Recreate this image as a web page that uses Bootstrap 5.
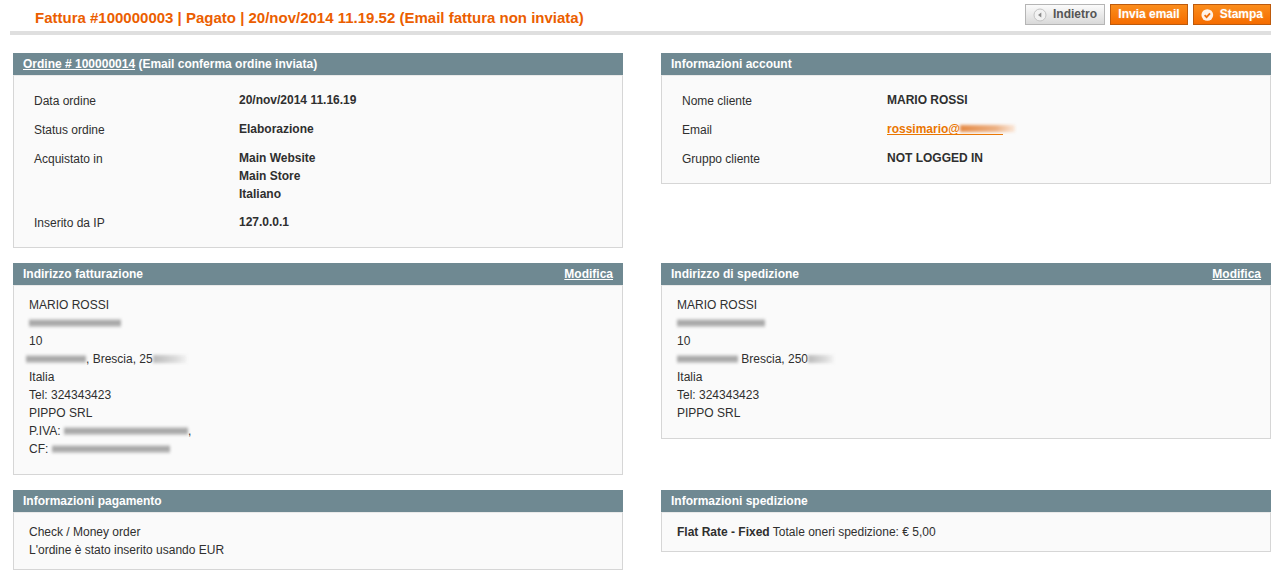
<!DOCTYPE html>
<html lang="it">
<head>
<meta charset="utf-8">
<title>Fattura</title>
<link href="https://cdn.jsdelivr.net/npm/bootstrap@5.3.0/dist/css/bootstrap.min.css" rel="stylesheet">
<style>
body{font-family:"Liberation Sans",Arial,sans-serif;font-size:12px;line-height:18px;color:#2f2f2f;background:#fff;overflow:hidden}
.pagewrap{padding:0 11px 0 13px}
.headbar{margin-left:-3px;height:35px;border-bottom:4px solid #dfdfdf;padding:4px 0 0 25px}
.headtitle{font-size:15px;line-height:21px;font-weight:700;color:#eb5e00;margin:3px 0 0}
.btnset{gap:5px}
.mbtn{height:21px;font:700 12px/19px "Liberation Sans",Arial,sans-serif;padding:0 7px;border:1px solid #bd5a0c;border-radius:0;color:#fff;background:linear-gradient(#fb8d1c,#f56c00);display:flex;align-items:center;gap:6px;text-shadow:0 0 2px #fff5}
.mbtn.backb{color:#555;border-color:#b5b5b5;background:linear-gradient(#fbfbfb,#d9d9d9);text-shadow:none;width:80px}
.mbtn.sendb{width:78px;justify-content:center}
.mbtn.printb{width:78px;justify-content:center}
.panelrow{--bs-gutter-x:38px;--bs-gutter-y:0;margin-bottom:15px}
.panelrow.firstr{margin-top:18px}
.phead{height:22px;background:#6f8992;color:#fff;font-weight:700;line-height:22px;padding:0 10px;display:flex;justify-content:space-between}
.phead a{color:#fff}
.pbody{background:#fafafa;border:1px solid #d6d6d6;border-top:1px solid #e9e9e9}
.pinfo{padding:15px 20px 15px}
.padr{padding:10px 15px 0}
.pinfo table{border-collapse:collapse}
.pinfo th{font-weight:400;width:205px;vertical-align:top;padding:1px 0 10px 0}
.pinfo td{font-weight:700;vertical-align:top;padding:0 0 11px}
.pinfo tr:last-child td{padding-bottom:0}
.pinfo tr:last-child th{padding-bottom:0}
.pinfo tr.spanrow td{padding-bottom:10px}
.pinfo tr.spanrow th{padding-bottom:9px}
.mlink{color:#ea7601}
.mailwrap{display:block;height:18px;width:116px;white-space:nowrap;background:linear-gradient(#ea7601,#ea7601) 0 14px/100% 1px no-repeat}
.mailwrap a{text-decoration:none}
.smudge{display:inline-block;height:8px;vertical-align:0;background:linear-gradient(#d2d2d2,#9d9d9d 45%,#c9c9c9);filter:blur(1.4px)}
.smudge.pale{background:linear-gradient(90deg,#bbb,#ddd 70%,#f4f4f4)}
.smudge.ors{background:linear-gradient(90deg,#e58a45,#ecb083 65%,#fae8da);height:7px;vertical-align:1px}
.h-b{height:190px}
.h-c{height:154px}
</style>
</head>
<body>
<div class="pagewrap">
  <div class="headbar d-flex justify-content-between align-items-start">
    <h3 class="headtitle">Fattura #100000003 | Pagato | 20/nov/2014 11.19.52 (Email fattura non inviata)</h3>
    <div class="d-flex btnset">
      <button class="mbtn backb" type="button"><svg width="14" height="14" viewBox="0 0 14 14"><circle cx="7" cy="7" r="6" fill="#f2f2f2" stroke="#c4c4c4"/><path d="M8.3 4.6v4.8L5 7z" fill="#8a8a8a"/></svg>Indietro</button>
      <button class="mbtn sendb" type="button">Invia email</button>
      <button class="mbtn printb" type="button"><svg width="14" height="14" viewBox="0 0 14 14"><circle cx="7" cy="7" r="6.5" fill="#fff" fill-opacity=".9"/><path d="M4 7.2l2.2 2.2L10 5.2" fill="none" stroke="#f0700a" stroke-width="2"/></svg>Stampa</button>
    </div>
  </div>

  <div class="row panelrow firstr align-items-start">
    <div class="col-6">
      <div class="phead"><span><a href="#">Ordine # 100000014</a> (Email conferma ordine inviata)</span></div>
      <div class="pbody pinfo">
        <table>
          <tr><th>Data ordine</th><td>20/nov/2014 11.16.19</td></tr>
          <tr><th>Status ordine</th><td>Elaborazione</td></tr>
          <tr class="spanrow"><th>Acquistato in</th><td>Main Website<br>Main Store<br>Italiano</td></tr>
          <tr><th>Inserito da IP</th><td>127.0.0.1</td></tr>
        </table>
      </div>
    </div>
    <div class="col-6">
      <div class="phead"><span>Informazioni account</span></div>
      <div class="pbody pinfo">
        <table>
          <tr><th>Nome cliente</th><td>MARIO ROSSI</td></tr>
          <tr><th>Email</th><td><span class="mailwrap"><a href="#" class="mlink">rossimario@</a><span class="smudge ors" style="width:55px"></span></span></td></tr>
          <tr><th>Gruppo cliente</th><td>NOT LOGGED IN</td></tr>
        </table>
      </div>
    </div>
  </div>

  <div class="row panelrow align-items-start">
    <div class="col-6">
      <div class="phead"><span>Indirizzo fatturazione</span><a href="#">Modifica</a></div>
      <div class="pbody padr h-b">
        MARIO ROSSI<br>
        <span class="smudge" style="width:92px"></span><br>
        10<br>
        <span class="smudge" style="width:60px;margin-left:-3px"></span>, Brescia, 25<span class="smudge pale" style="width:34px"></span><br>
        Italia<br>
        Tel: 324343423<br>
        PIPPO SRL<br>
        P.IVA: <span class="smudge" style="width:124px"></span>,<br>
        CF: <span class="smudge" style="width:118px"></span>
      </div>
    </div>
    <div class="col-6">
      <div class="phead"><span>Indirizzo di spedizione</span><a href="#">Modifica</a></div>
      <div class="pbody padr h-c">
        MARIO ROSSI<br>
        <span class="smudge" style="width:88px"></span><br>
        10<br>
        <span class="smudge" style="width:61px"></span> Brescia, 250<span class="smudge pale" style="width:26px"></span><br>
        Italia<br>
        Tel: 324343423<br>
        PIPPO SRL
      </div>
    </div>
  </div>

  <div class="row panelrow align-items-start">
    <div class="col-6">
      <div class="phead"><span>Informazioni pagamento</span></div>
      <div class="pbody padr" style="height:58px">Check / Money order<br>L'ordine è stato inserito usando EUR</div>
    </div>
    <div class="col-6">
      <div class="phead"><span>Informazioni spedizione</span></div>
      <div class="pbody padr" style="height:40px"><b>Flat Rate - Fixed</b> Totale oneri spedizione: € 5,00</div>
    </div>
  </div>
</div>
</body>
</html>
